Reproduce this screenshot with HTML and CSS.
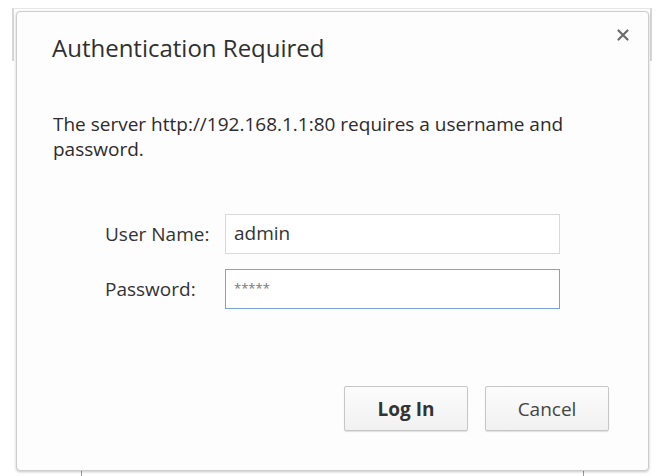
FILE: index.html
```html
<!DOCTYPE html>
<html>
<head>
<meta charset="utf-8">
<link rel="stylesheet" href="styles.css">
</head>
<body>
<div class="backdrop">
  <div class="toolbar"></div>
  <div class="tick tick-left"></div>
  <div class="tick tick-right"></div>
</div>
<div class="dialog">
  <div class="header">
    <h1 class="title">Authentication Required</h1>
    <button class="close" aria-label="Close">
      <svg width="12" height="12" viewBox="0 0 12 12"><path d="M1.5 1.5 L10.5 10.5 M10.5 1.5 L1.5 10.5" stroke="#6b6b6b" stroke-width="2.2" stroke-linecap="round"/></svg>
    </button>
  </div>
  <p class="message">The server http://192.168.1.1:80 requires a username and password.</p>
  <div class="form">
    <div class="row">
      <label class="label">User Name:</label>
      <div class="input">admin</div>
    </div>
    <div class="row">
      <label class="label">Password:</label>
      <div class="input input-focus"><span class="stars">*****</span></div>
    </div>
  </div>
  <div class="buttons">
    <button class="btn btn-primary">Log In</button>
    <button class="btn">Cancel</button>
  </div>
</div>
</body>
</html>
```
FILE: styles.css
```css
html, body {
  margin: 0;
  padding: 0;
}
body {
  width: 656px;
  height: 476px;
  overflow: hidden;
  background: #ffffff;
  font-family: "Open Sans", "Noto Sans", sans-serif;
  color: #333333;
  position: relative;
}
.backdrop {
  position: absolute;
  left: 0;
  top: 0;
  width: 656px;
  height: 476px;
}
.toolbar {
  position: absolute;
  left: 12px;
  top: 8px;
  width: 636px;
  height: 52px;
  border-left: 2px solid #d6d6d6;
  border-right: 2px solid #d6d6d6;
  border-top: 1px solid #e6e6e6;
}
.tick {
  position: absolute;
  top: 470px;
  width: 1px;
  height: 6px;
  background: #9a9a9a;
}
.tick-left { left: 81px; }
.tick-right { left: 583px; }
.dialog {
  position: relative;
  margin: 11px 0 0 16px;
  width: 633px;
  height: 460px;
  box-sizing: border-box;
  border: 1px solid #cdcdcd;
  border-radius: 4px;
  background: #fdfdfd;
  box-shadow: 0 1px 3px rgba(0, 0, 0, 0.22);
}
.header {
  padding: 20px 0 0 35px;
}
.title {
  margin: 0;
  font-size: 24px;
  font-weight: 400;
  line-height: 32px;
  color: #303030;
}
.close {
  position: absolute;
  top: 17px;
  right: 19px;
  width: 12px;
  height: 12px;
  padding: 0;
  border: 0;
  background: none;
  display: flex;
}
.message {
  margin: 48px 40px 0 36px;
  font-size: 19px;
  line-height: 25px;
  color: #2f2a2c;
}
.form {
  margin-top: 52px;
  padding-left: 88px;
  display: flex;
  flex-direction: column;
  gap: 15px;
}
.row {
  display: flex;
  align-items: center;
}
.label {
  width: 120px;
  font-size: 19px;
  color: #333333;
}
.input {
  width: 335px;
  height: 40px;
  box-sizing: border-box;
  border: 1px solid #d9d9d9;
  background: #ffffff;
  padding: 0 8px;
  font-size: 19px;
  line-height: 36px;
  color: #333333;
}
.input-focus {
  border: 1px solid #7ba4d6;
}
.stars {
  font-size: 13px;
  color: #777777;
  letter-spacing: 0;
  vertical-align: 4px;
}
.buttons {
  margin-top: 77px;
  padding-right: 39px;
  display: flex;
  justify-content: flex-end;
  gap: 17px;
}
.btn {
  width: 124px;
  height: 45px;
  box-sizing: border-box;
  border: 1px solid #c6c6c6;
  border-radius: 2px;
  background: linear-gradient(#fcfcfc, #f1f1f1);
  box-shadow: 0 1px 1px rgba(0, 0, 0, 0.12);
  font-family: "Open Sans", "Noto Sans", sans-serif;
  font-size: 19px;
  color: #444444;
  padding: 0;
}
.btn-primary {
  font-weight: 700;
  color: #333333;
}
```
